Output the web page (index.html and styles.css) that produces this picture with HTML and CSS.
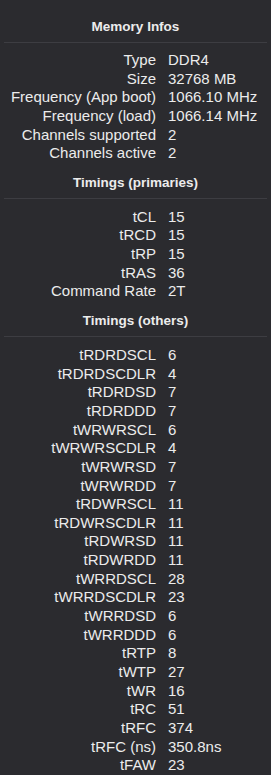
FILE: index.html
```html
<!DOCTYPE html>
<html lang="en">
<head>
    <meta charset="UTF-8">
    <meta name="viewport" content="width=device-width, initial-scale=1.0">
    <title>Memory Infos</title>
    <link rel="stylesheet" href="styles.css">
</head>
<body>

    <div class="panel">
        <div class="section">
            <h2 class="section-title">Memory Infos</h2>
            <div class="rows">
                <span class="label">Type</span><span class="value">DDR4</span>
                <span class="label">Size</span><span class="value">32768 MB</span>
                <span class="label">Frequency (App boot)</span><span class="value">1066.10 MHz</span>
                <span class="label">Frequency (load)</span><span class="value">1066.14 MHz</span>
                <span class="label">Channels supported</span><span class="value">2</span>
                <span class="label">Channels active</span><span class="value">2</span>
            </div>
        </div>

        <div class="section">
            <h2 class="section-title">Timings (primaries)</h2>
            <div class="rows">
                <span class="label">tCL</span><span class="value">15</span>
                <span class="label">tRCD</span><span class="value">15</span>
                <span class="label">tRP</span><span class="value">15</span>
                <span class="label">tRAS</span><span class="value">36</span>
                <span class="label">Command Rate</span><span class="value">2T</span>
            </div>
        </div>

        <div class="section">
            <h2 class="section-title">Timings (others)</h2>
            <div class="rows">
                <span class="label">tRDRDSCL</span><span class="value">6</span>
                <span class="label">tRDRDSCDLR</span><span class="value">4</span>
                <span class="label">tRDRDSD</span><span class="value">7</span>
                <span class="label">tRDRDDD</span><span class="value">7</span>
                <span class="label">tWRWRSCL</span><span class="value">6</span>
                <span class="label">tWRWRSCDLR</span><span class="value">4</span>
                <span class="label">tWRWRSD</span><span class="value">7</span>
                <span class="label">tWRWRDD</span><span class="value">7</span>
                <span class="label">tRDWRSCL</span><span class="value">11</span>
                <span class="label">tRDWRSCDLR</span><span class="value">11</span>
                <span class="label">tRDWRSD</span><span class="value">11</span>
                <span class="label">tRDWRDD</span><span class="value">11</span>
                <span class="label">tWRRDSCL</span><span class="value">28</span>
                <span class="label">tWRRDSCDLR</span><span class="value">23</span>
                <span class="label">tWRRDSD</span><span class="value">6</span>
                <span class="label">tWRRDDD</span><span class="value">6</span>
                <span class="label">tRTP</span><span class="value">8</span>
                <span class="label">tWTP</span><span class="value">27</span>
                <span class="label">tWR</span><span class="value">16</span>
                <span class="label">tRC</span><span class="value">51</span>
                <span class="label">tRFC</span><span class="value">374</span>
                <span class="label">tRFC (ns)</span><span class="value">350.8ns</span>
                <span class="label">tFAW</span><span class="value">23</span>
            </div>
        </div>
    </div>

</body>
</html>
```

FILE: styles.css
```css
body {
    margin: 0;
    background-color: #2b2b2f;
    color: #ececec;
    font-family: "Liberation Sans", Arial, sans-serif;
    font-size: 15px;
}
.panel {
    width: 271px;
    padding-top: 17px;
}
.section-title {
    margin: 0 4px;
    padding-bottom: 5px;
    border-bottom: 1px solid #3d3d42;
    font-size: 13.5px;
    font-weight: bold;
    line-height: 20px;
    text-align: center;
}
.section + .section .section-title {
    margin-top: 10px;
}
.rows {
    display: grid;
    grid-template-columns: 156px 1fr;
    column-gap: 12px;
    padding-top: 8px;
}
.section + .section .rows {
    padding-top: 9px;
}
.label,
.value {
    line-height: 18.64px;
    white-space: nowrap;
}
.label {
    text-align: right;
}
```
